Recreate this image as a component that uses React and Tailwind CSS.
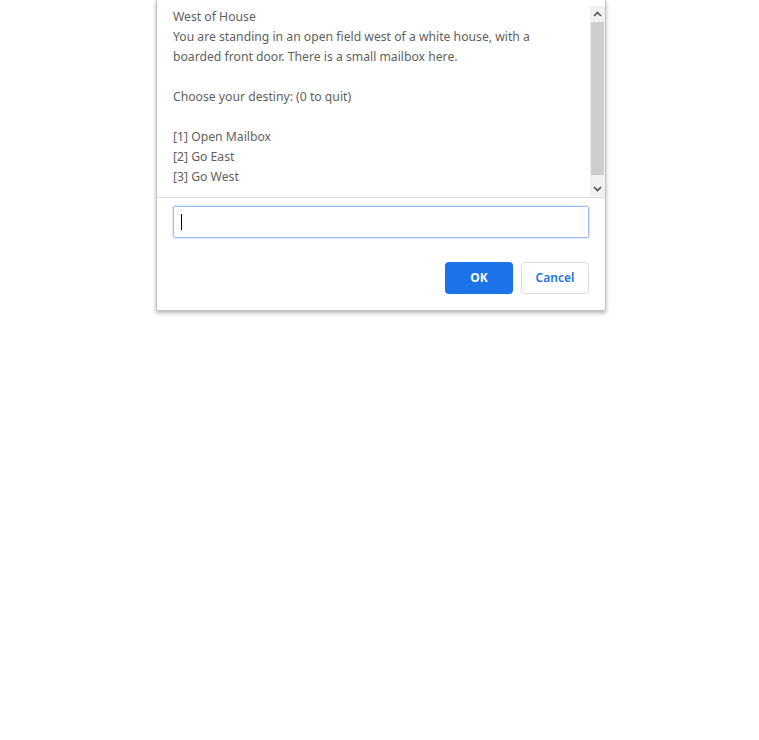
import React from "react";

const lines = [
  "West of House",
  "You are standing in an open field west of a white house, with a",
  "boarded front door. There is a small mailbox here.",
  "",
  "Choose your destiny: (0 to quit)",
  "",
  "[1] Open Mailbox",
  "[2] Go East",
  "[3] Go West",
];

const Chevron = ({ up }) => (
  <svg width="9" height="6" viewBox="0 0 9 6" className={up ? "" : "rotate-180"}>
    <path d="M1 5 L4.5 1.5 L8 5" fill="none" stroke="#505050" strokeWidth="1.6" />
  </svg>
);

export default function App() {
  return (
    <div className="w-full min-h-[740px] bg-white" style={{ fontFamily: '"Noto Sans", "Open Sans", sans-serif' }}>
      {/* ===== Prompt dialog ===== */}
      <div className="ml-[156px] w-[450px] bg-white border border-t-0 border-[#c4c4c4] shadow-[0_2px_4px_rgba(0,0,0,0.3)] pt-[6px]">
        <div className="flex h-[192px] border-b border-[#dadce0]">
          <div className="flex-1 pl-[16px] pt-[1px] text-[12.2px] leading-[20px] text-[#5f5f5f] overflow-hidden">
            {lines.map((l, i) => (
              <div key={i} className="h-[20px] whitespace-nowrap">{l}</div>
            ))}
          </div>
          {/* scrollbar */}
          <div className="w-[15px] bg-[#f1f1f1] flex flex-col">
            <div className="h-[16px] flex items-center justify-center">
              <Chevron up />
            </div>
            <div className="h-[153px] mx-[1px] bg-[#cdcdcd]" />
            <div className="flex-1" />
            <div className="h-[16px] flex items-center justify-center">
              <Chevron />
            </div>
          </div>
        </div>

        <div className="px-[16px] pt-[8px]">
          <div className="h-[32px] border border-[#9ec0f5] rounded-[2px] shadow-[0_0_0_1px_rgba(158,192,245,0.35)] flex items-center pl-[7px]">
            <div className="w-[1px] h-[16px] bg-black" />
          </div>
        </div>

        <div className="flex justify-end gap-[8px] px-[16px] pt-[24px] pb-[16px]">
          <button className="w-[68px] h-[32px] rounded-[4px] bg-[#1a73e8] text-white text-[12px] font-bold">
            OK
          </button>
          <button className="w-[68px] h-[32px] rounded-[4px] border border-[#dadce0] bg-white text-[#1a73e8] text-[12px] font-semibold">
            Cancel
          </button>
        </div>
      </div>
    </div>
  );
}
